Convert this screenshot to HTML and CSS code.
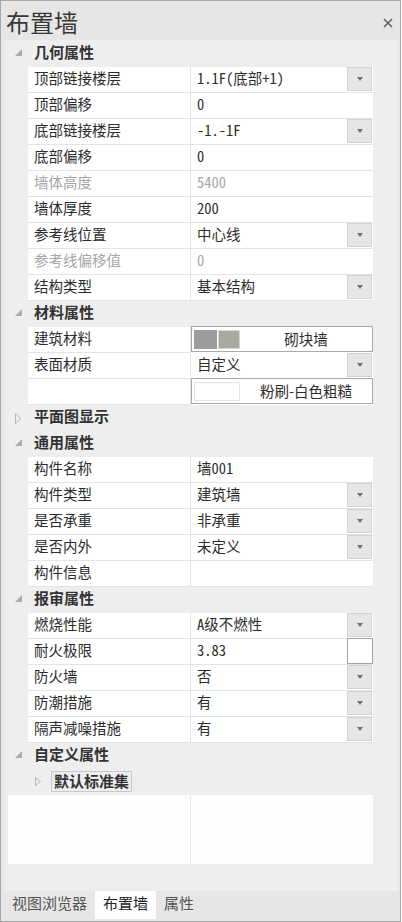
FILE: index.html
```html
<!DOCTYPE html>
<html lang="zh-CN">
<head>
<meta charset="utf-8">
<title>布置墙</title>
<link rel="stylesheet" href="styles.css">
</head>
<body>
<div class="window">
  <div class="titlebar">
    <span class="title">布置墙</span>
    <span class="close"><svg width="10" height="10" viewBox="0 0 10 10"><path d="M1 1 L9 9 M9 1 L1 9" stroke="#555" stroke-width="1.4" fill="none"/></svg></span>
  </div>
  <div class="panel">
    <div class="grid">
      <div class="cat"><span class="exp"><svg class="open" width="7" height="7" viewBox="0 0 7 7"><polygon points="7,0 7,7 0,7" fill="#ababab"/></svg></span><span class="cat-text">几何属性</span></div>
      <div class="row"><div class="label">顶部链接楼层</div><div class="value"><span class="v">1.1F(底部+1)</span><span class="dd"><i></i></span></div></div>
      <div class="row"><div class="label">顶部偏移</div><div class="value"><span class="v">0</span></div></div>
      <div class="row"><div class="label">底部链接楼层</div><div class="value"><span class="v">-1.-1F</span><span class="dd"><i></i></span></div></div>
      <div class="row"><div class="label">底部偏移</div><div class="value"><span class="v">0</span></div></div>
      <div class="row disabled"><div class="label">墙体高度</div><div class="value"><span class="v">5400</span></div></div>
      <div class="row"><div class="label">墙体厚度</div><div class="value"><span class="v">200</span></div></div>
      <div class="row"><div class="label">参考线位置</div><div class="value"><span class="v">中心线</span><span class="dd"><i></i></span></div></div>
      <div class="row disabled"><div class="label">参考线偏移值</div><div class="value"><span class="v">0</span></div></div>
      <div class="row"><div class="label">结构类型</div><div class="value"><span class="v">基本结构</span><span class="dd"><i></i></span></div></div>

      <div class="cat"><span class="exp"><svg class="open" width="7" height="7" viewBox="0 0 7 7"><polygon points="7,0 7,7 0,7" fill="#ababab"/></svg></span><span class="cat-text">材料属性</span></div>
      <div class="row"><div class="label">建筑材料</div><div class="value boxed"><div class="box"><span class="sw sw-dark"></span><span class="sw sw-stone"></span><span class="box-text">砌块墙</span></div></div></div>
      <div class="row"><div class="label">表面材质</div><div class="value"><span class="v">自定义</span><span class="dd"><i></i></span></div></div>
      <div class="row"><div class="label"></div><div class="value boxed"><div class="box"><span class="sw sw-white"></span><span class="box-text">粉刷-白色粗糙</span></div></div></div>

      <div class="cat"><span class="exp"><svg class="closed" width="7" height="11" viewBox="0 0 7 11"><polygon points="0.5,0.5 6,5.5 0.5,10.5" fill="none" stroke="#b5b5b5" stroke-width="1"/></svg></span><span class="cat-text">平面图显示</span></div>

      <div class="cat"><span class="exp"><svg class="open" width="7" height="7" viewBox="0 0 7 7"><polygon points="7,0 7,7 0,7" fill="#ababab"/></svg></span><span class="cat-text">通用属性</span></div>
      <div class="row"><div class="label">构件名称</div><div class="value"><span class="v">墙001</span></div></div>
      <div class="row"><div class="label">构件类型</div><div class="value"><span class="v">建筑墙</span><span class="dd"><i></i></span></div></div>
      <div class="row"><div class="label">是否承重</div><div class="value"><span class="v">非承重</span><span class="dd"><i></i></span></div></div>
      <div class="row"><div class="label">是否内外</div><div class="value"><span class="v">未定义</span><span class="dd"><i></i></span></div></div>
      <div class="row"><div class="label">构件信息</div><div class="value"><span class="v"></span></div></div>

      <div class="cat"><span class="exp"><svg class="open" width="7" height="7" viewBox="0 0 7 7"><polygon points="7,0 7,7 0,7" fill="#ababab"/></svg></span><span class="cat-text">报审属性</span></div>
      <div class="row"><div class="label">燃烧性能</div><div class="value"><span class="v">A级不燃性</span><span class="dd"><i></i></span></div></div>
      <div class="row"><div class="label">耐火极限</div><div class="value"><span class="v">3.83</span><span class="dd edit"></span></div></div>
      <div class="row"><div class="label">防火墙</div><div class="value"><span class="v">否</span><span class="dd"><i></i></span></div></div>
      <div class="row"><div class="label">防潮措施</div><div class="value"><span class="v">有</span><span class="dd"><i></i></span></div></div>
      <div class="row"><div class="label">隔声减噪措施</div><div class="value"><span class="v">有</span><span class="dd"><i></i></span></div></div>

      <div class="cat"><span class="exp"><svg class="open" width="7" height="7" viewBox="0 0 7 7"><polygon points="7,0 7,7 0,7" fill="#ababab"/></svg></span><span class="cat-text">自定义属性</span></div>
      <div class="subcat"><span class="sub-exp"><svg width="6" height="9" viewBox="0 0 6 9"><polygon points="0.5,0.5 5.5,4.5 0.5,8.5" fill="none" stroke="#b5b5b5" stroke-width="1"/></svg></span><span class="sub-box">默认标准集</span></div>
    </div>
    <div class="desc"><div class="desc-l"></div><div class="desc-r"></div></div>
  </div>
  <div class="tabbar">
    <span class="tab">视图浏览器</span>
    <span class="tab active">布置墙</span>
    <span class="tab">属性</span>
  </div>
</div>
</body>
</html>
```

FILE: styles.css
```css
* { box-sizing: border-box; }
html, body { margin: 0; padding: 0; background: #ffffff; }
body {
  font-family: "Noto Sans CJK SC", "Noto Sans", sans-serif;
  color: #2c2c2c;
}

.window {
  width: 401px;
  height: 922px;
  border: 1px solid #a8a8a8;
  background: #e6e6e6;
  display: flex;
  flex-direction: column;
}

.titlebar {
  height: 39px;
  flex: 0 0 39px;
  display: flex;
  align-items: center;
  justify-content: space-between;
  padding: 2px 7px 0 5px;
}
.title {
  font-size: 24px;
  line-height: 30px;
  color: #383838;
}
.close { display: flex; width: 10px; height: 10px; margin-top: 2px; }

.panel {
  flex: 0 0 851px;
  margin: 0 2px 0 3px;
  background: #eeeeee;
  padding-top: 1px;
  display: flex;
  flex-direction: column;
}

.grid { width: 369px; }

.row {
  display: flex;
  height: 26px;
  padding-left: 24px;
}
.label {
  width: 163px;
  background: #ffffff;
  border-right: 1px solid #e4e4e4;
  border-bottom: 1px solid #e4e4e4;
  padding-left: 6px;
  font-size: 14.5px;
  line-height: 22px;
  white-space: nowrap;
}
.value {
  width: 182px;
  background: #ffffff;
  border-bottom: 1px solid #e4e4e4;
  display: flex;
}
.v {
  flex: 1;
  padding-left: 6px;
  font-family: "Noto Sans Mono CJK SC", "Noto Sans CJK SC", "Liberation Mono", monospace;
  font-size: 14.5px;
  line-height: 22px;
  white-space: nowrap;
}
.disabled .label, .disabled .v { color: #a6a6a6; }

.dd {
  flex: 0 0 25px;
  height: 24px;
  margin-right: 1px;
  border: 1px solid #d2d2d2;
  background: #e6e6e6;
  display: flex;
  align-items: center;
  justify-content: center;
}
.dd i {
  display: block;
  width: 0;
  height: 0;
  border-left: 3.5px solid transparent;
  border-right: 3.5px solid transparent;
  border-top: 4px solid #6e6e6e;
}
.dd.edit {
  flex: 0 0 26px;
  height: 26px;
  margin-top: -1px;
  margin-right: 0;
  background: #ffffff;
  border-color: #a4a4a4;
}

.value.boxed { border-bottom: none; }
.box {
  width: 182px;
  height: 26px;
  margin-top: -1px;
  border: 1px solid #a9a9a9;
  background: #ffffff;
  display: flex;
  align-items: center;
  padding-left: 2px;
}
.sw { display: block; height: 19px; }
.sw-dark { width: 23px; background: #9c9c9c; }
.sw-stone { width: 22px; margin-left: 1px; background: #a9a99f; border: 1px solid #d6d6d6; }
.sw-white { width: 46px; background: #ffffff; border: 1px solid #e4e4e4; }
.box-text {
  flex: 1;
  text-align: center;
  font-size: 14.5px;
  line-height: 22px;
  white-space: nowrap;
}

.cat {
  display: flex;
  height: 26px;
  background: #eeeeee;
}
.exp {
  flex: 0 0 24px;
  padding-left: 11px;
}
.exp .open { display: block; margin-top: 8px; }
.exp .closed { display: block; margin-top: 8px; }
.cat-text {
  padding-left: 6px;
  font-size: 15px;
  font-weight: 700;
  line-height: 22px;
  color: #333333;
}

.subcat {
  display: flex;
  align-items: flex-start;
  height: 26px;
  padding-left: 31px;
}
.sub-exp { display: block; margin-top: 8px; width: 16px; }
.sub-exp svg { display: block; }
.sub-box {
  margin-top: 2px;
  height: 21px;
  border: 1px solid #c9c9c9;
  padding: 0 2px;
  font-size: 15px;
  font-weight: 700;
  line-height: 17px;
  color: #333333;
}

.desc {
  display: flex;
  height: 69px;
  width: 365px;
  margin-left: 4px;
}
.desc-l { width: 183px; background: #fdfdfd; border-right: 1px solid #e8e8e8; }
.desc-r { width: 182px; background: #fdfdfd; }

.tabbar {
  flex: 0 0 30px;
  display: flex;
  padding-left: 3px;
}
.tab {
  height: 28px;
  padding: 0 8px;
  font-size: 15px;
  line-height: 24px;
  color: #555555;
  white-space: nowrap;
}
.tab.active { background: #ffffff; color: #222222; }
```
